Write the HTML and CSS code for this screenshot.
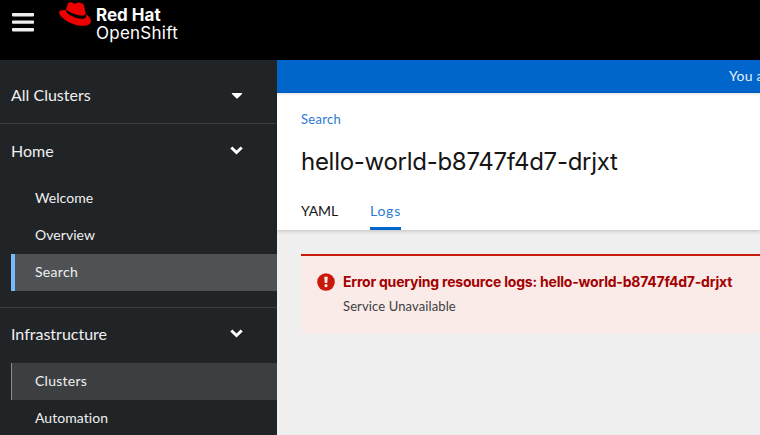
FILE: index.html
```
<!DOCTYPE html>
<html lang="en">
<head>
<meta charset="utf-8">
<title>Red Hat OpenShift</title>
<link rel="stylesheet" href="styles.css">
</head>
<body>
<header class="masthead">
  <svg class="menu-icon" width="22" height="20" viewBox="0 0 22 20" fill="#f0f0f0"><rect y="1" width="22" height="3.4" rx=".8"/><rect y="8.4" width="22" height="3.4" rx=".8"/><rect y="16" width="22" height="3.4" rx=".8"/></svg>
  <svg class="hat" width="32" height="25" viewBox="0 0 32 25">
    <path fill="#e00" d="M9.2 1.1C10 .1 11.4 0 13.2.6c1.3.5 2.2 1.5 3.5.8C18.500.500 19.700.200 21.300.700c2.100.7 3.300 1.200 3.800 3.300l1.900 8.400c3 1.500 5.300 4.200 5 6.800-.4 4.100-6.500 5.600-13.700 4C9.300 21.300 0 14.700.1 10.500.2 8.300 3 7.800 6.900 8.100z"/>
    <path fill="#000" d="M7.200 7.600c-.2 1-.4 1.700.4 2.700 2.300 2.800 8.400 6 14.700 6.400 3.500.2 5.300-1 4.800-3.300l-.5-2c.1 1.500-1.500 2.500-4.800 2.200-5.500-.5-12.300-3.700-14.600-6z"/>
  </svg>
  <div class="brand"><strong>Red Hat</strong><span>OpenShift</span></div>
</header>
<div class="page">
  <nav class="sidebar">
    <div class="switcher"><span>All Clusters</span><svg width="12" height="6" viewBox="0 0 12 6"><path fill="#fff" d="M1.200 0h9.600q.8.200.2 1L6.700 5.200q-.7.600-1.400 0L1 1Q.4.200 1.200 0z"/></svg></div>
    <section class="group home">
      <h2><span>Home</span><svg width="13" height="9" viewBox="0 0 13 9"><path d="M1.300 1.500 6.500 6.500l5.200-5" fill="none" stroke="#fff" stroke-width="3"/></svg></h2>
      <a>Welcome</a>
      <a>Overview</a>
      <a class="current">Search</a>
    </section>
    <section class="group infrastructure">
      <h2><span>Infrastructure</span><svg width="13" height="9" viewBox="0 0 13 9"><path d="M1.300 1.500 6.500 6.500l5.200-5" fill="none" stroke="#fff" stroke-width="3"/></svg></h2>
      <a class="hover">Clusters</a>
      <a>Automation</a>
    </section>
  </nav>
  <main class="content">
    <div class="banner">You a</div>
    <div class="heading">
      <a class="crumb">Search</a>
      <h1>hello-world-b8747f4d7-drjxt</h1>
      <div class="tabs"><a>YAML</a><a class="active">Logs</a></div>
    </div>
    <div class="alert">
      <svg width="18" height="18" viewBox="0 0 18 18"><circle cx="9" cy="9" r="8.800" fill="#c9190b"/><path fill="#faeae8" d="M7.300 3.800h3.400l-.4 6.300H7.700z"/><circle cx="9" cy="12.700" r="1.600" fill="#faeae8"/></svg>
      <div>
        <h4>Error querying resource logs: hello-world-b8747f4d7-drjxt</h4>
        <p>Service Unavailable</p>
      </div>
    </div>
  </main>
</div>
</body>
</html>
```
FILE: styles.css
```
* { box-sizing: border-box; }
body { margin: 0; height: 435px; overflow: hidden; font-family: Lato, "Open Sans", sans-serif; font-size: 14px; background: #efefef; }
h1, h2, h4, p { margin: 0; font-weight: 400; }
svg { display: block; flex: none; }
.masthead { display: flex; align-items: flex-start; height: 60px; padding-left: 12px; background: #000; }
.menu-icon { margin-top: 12px; }
.hat { margin: 2px 5px 0 25px; }
.brand { display: flex; flex-direction: column; padding-top: 6px; color: #fff; font: 17px/18px Inter, sans-serif; }
.brand strong { font-weight: 700; }
.brand span { letter-spacing: .25px; }
.page { display: flex; height: 375px; }
.sidebar { width: 277px; flex: none; overflow: hidden; background: #212427; color: #f0f0f0; }
.switcher { display: flex; align-items: center; justify-content: space-between; height: 64px; padding: 5px 34px 0 11px; border-bottom: 1px solid #3c3f42; font-size: 16px; }
.switcher svg { margin-top: 3px; }
.group h2 { display: flex; align-items: center; justify-content: space-between; height: 56px; padding: 0 34px 4px 11px; font-size: 16px; }
.group h2 svg { margin-top: 1px; }
.home { height: 184px; border-bottom: 1px solid #3c3f42; }
.infrastructure h2 { height: 55px; padding-bottom: 5px; }
.group a { display: block; height: 37px; margin-left: 11px; padding-left: 24px; line-height: 35px; letter-spacing: .05px; }
.group .current { padding-left: 20px; border-left: 4px solid #73bcf7; background: #4f5255; letter-spacing: .3px; }
.group .hover { padding-left: 23px; border-left: 1px solid #8a8d90; background: #3c3f42; letter-spacing: .25px; }
.content { flex: 1; min-width: 0; }
.banner { height: 33px; padding-left: 452px; overflow: hidden; white-space: nowrap; background: #06c; color: #e7f1fa; line-height: 31px; letter-spacing: .25px; }
.heading { position: relative; height: 137px; padding: 17px 24px 0; background: #fff; box-shadow: 0 1px 4px rgba(3, 3, 3, .22), inset 0 3px 3px -2px rgba(3, 3, 3, .12); }
.crumb { display: block; height: 19px; color: #2b7ad3; font-size: 13px; line-height: 19px; letter-spacing: .3px; }
h1 { margin-top: 17px; color: #151515; font: 24px/32px Inter, sans-serif; letter-spacing: -.28px; }
.tabs { display: flex; gap: 32px; margin-top: 15px; }
.tabs a { height: 37px; line-height: 35px; color: #151515; letter-spacing: -.1px; }
.tabs .active { color: #2b7ad3; border-bottom: 3px solid #06c; letter-spacing: .75px; }
.alert { display: flex; gap: 8px; height: 79px; margin: 24px 0 0 24px; padding: 17px 16px; border-top: 2px solid #c9190b; background: #faeae8; }
h4 { color: #a30000; font: 700 14px/21px Inter, sans-serif; letter-spacing: -.21px; margin-top: -2px; white-space: nowrap; }
.alert p { margin-top: 4px; color: #3c3f42; font-size: 13px; line-height: 20px; letter-spacing: .12px; }
```
